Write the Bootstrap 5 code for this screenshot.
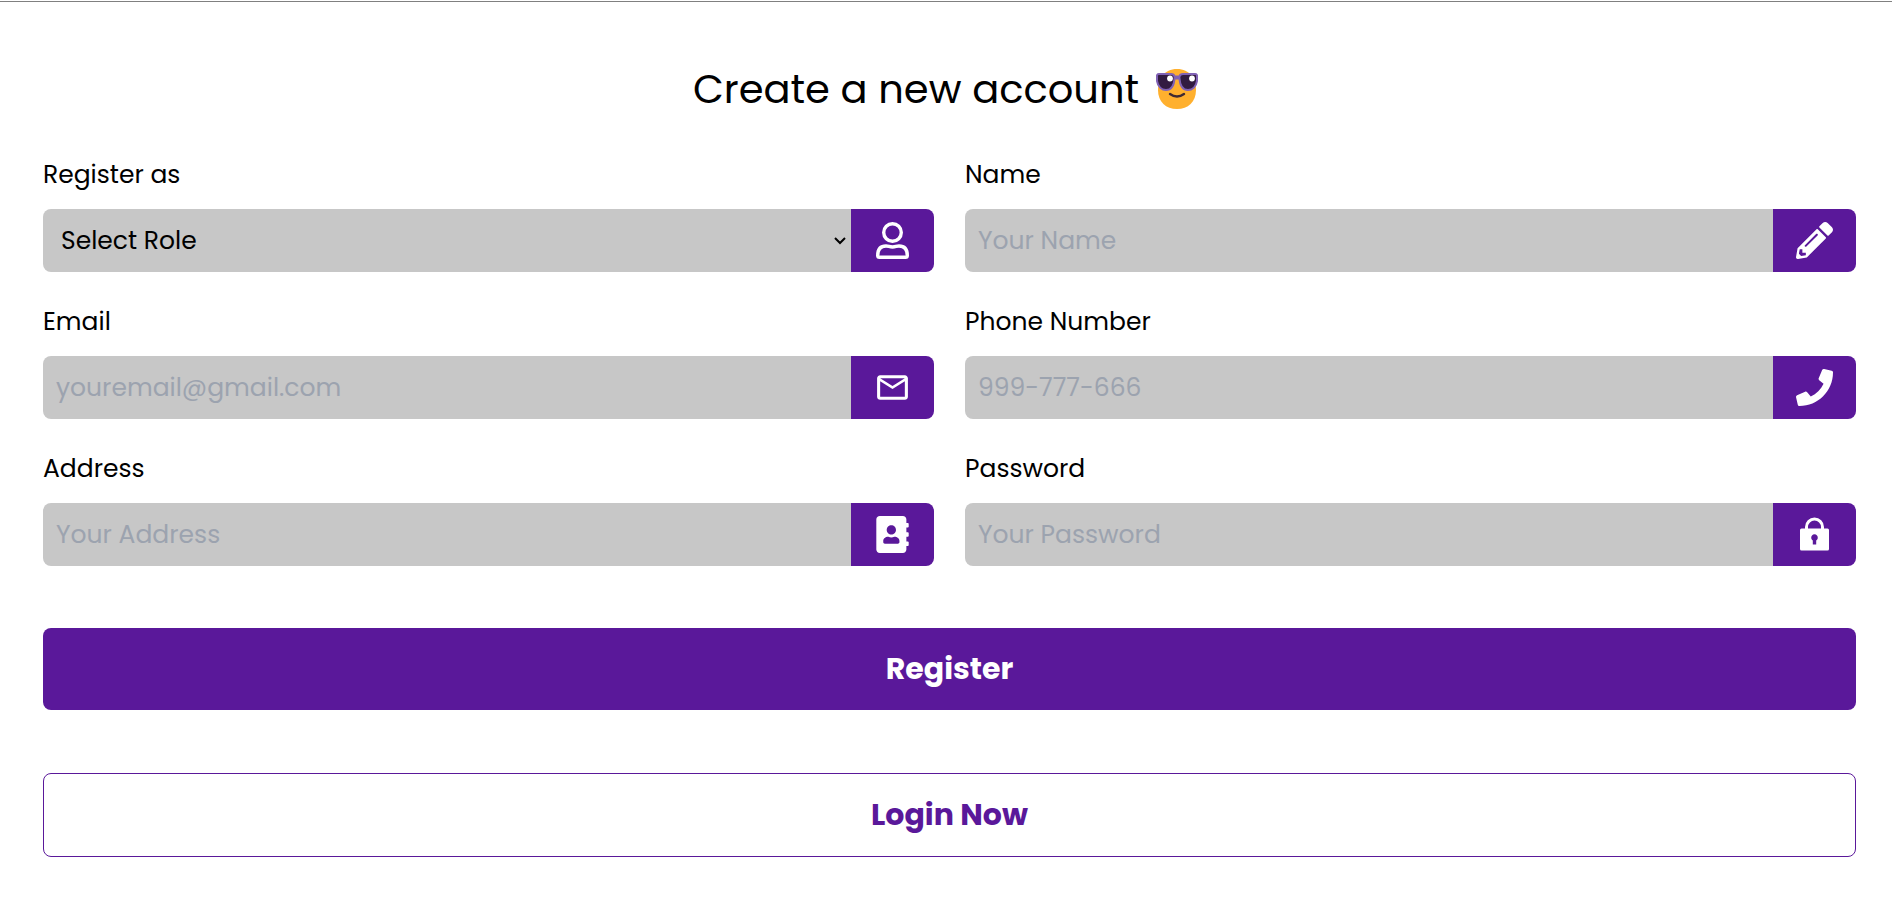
<!DOCTYPE html>
<html lang="en">
<head>
<meta charset="utf-8">
<meta name="viewport" content="width=device-width, initial-scale=1">
<title>Create a new account</title>
<link href="https://cdn.jsdelivr.net/npm/bootstrap@5.3.0/dist/css/bootstrap.min.css" rel="stylesheet">
<style>
  :root { --brand: #5a189a; --field: #c7c7c7; }
  body { font-family: Poppins, Inter, "Noto Sans", sans-serif; color: #000; background: #fff; font-size: 25px; line-height: 38px; }
  .top-rule { height: 2px; border-bottom: 1px solid #808080; }
  .signup { padding: 57px 0 48px; }
  .signup form { padding: 0 36px 0 43px; }
  .signup-title { font-size: 40px; line-height: 60px; font-weight: 400; margin-bottom: 37px; gap: 16px; }
  .fields { --bs-gutter-x: 31px; --bs-gutter-y: 31px; }
  .fields label { line-height: 38px; margin-bottom: 15px; }
  .entry { height: 63px; border-radius: 8px; overflow: hidden; }
  .entry input, .entry select { border: 0; background: var(--field); color: #000; min-width: 0; padding: 0 13px; outline-offset: -2px; }
  .entry select { appearance: none; padding: 0 24px 0 18px; background: var(--field) url("data:image/svg+xml,%3Csvg xmlns='http://www.w3.org/2000/svg' viewBox='0 0 12 8'%3E%3Cpath d='M1 1l5 5 5-5' fill='none' stroke='%23000' stroke-width='2'/%3E%3C/svg%3E") no-repeat right 5px center / 12px 8px; }
  .entry input::placeholder { color: #9ca3af; opacity: 1; }
  .entry-icon { width: 83px; background: var(--brand); color: #fff; }
  .action { border-radius: 8px; font-size: 30px; line-height: 46px; font-weight: 700; padding: 18px; border: 0; }
  .action-fill, .action-fill:hover { background: var(--brand); color: #fff; margin-top: 62px; }
  .action-line, .action-line:hover { border: 1px solid var(--brand); color: var(--brand); background: #fff; margin-top: 63px; }
</style>
</head>
<body>
<div class="top-rule"></div>
<main class="signup">
  <h1 class="signup-title d-flex justify-content-center align-items-center">Create a new account
    <svg width="44" height="44" viewBox="0 0 44 44" role="img" aria-label="Smiling face with sunglasses">
      <path d="M22 2C35 2 41 12 41 23C41 35 33 42 22 42S3 35 3 23C3 12 9 2 22 2Z" fill="#ffb02e"/>
      <path d="M15 27Q22 32 29 27" fill="none" stroke="#402a32" stroke-width="2.400" stroke-linecap="round"/>
      <path d="M4 7H16Q19 7 19.500 9.500H24.500Q25 7 28 7H40Q42.500 7 42 10V14C41 20 37 23 33 23C28 23 25 19 24.500 11.500H19.500C19 19 16 23 11 23C7 23 3 20 2 14V10Q1.500 7 4 7Z" fill="#321b41" stroke="#8061b4" stroke-width="2"/>
      <circle cx="15" cy="11.500" r="2.900" fill="#fff"/><circle cx="37" cy="11.500" r="2.900" fill="#fff"/>
    </svg>
  </h1>
  <form>
    <div class="row fields">
      <div class="col-6">
        <label for="role" class="d-block">Register as</label>
        <div class="entry d-flex">
          <select id="role" class="flex-grow-1"><option>Select Role</option></select>
          <span class="entry-icon d-flex align-items-center justify-content-center">
            <svg width="37" height="37" viewBox="0 0 37 37" fill="none" stroke="#fff" stroke-width="3.400" stroke-linejoin="round"><circle cx="18.500" cy="10.500" r="8.800"/><path d="M12 24C6 24 3.700 28 3.700 33.500Q3.700 35.300 5.500 35.300H31.500Q33.300 35.300 33.300 33.500C33.300 28 31 24 25 24C22 24 22 25 18.500 25S15 24 12 24Z"/></svg>
          </span>
        </div>
      </div>
      <div class="col-6">
        <label for="name" class="d-block">Name</label>
        <div class="entry d-flex">
          <input id="name" type="text" class="flex-grow-1" placeholder="Your Name">
          <span class="entry-icon d-flex align-items-center justify-content-center">
            <svg width="37" height="37" viewBox="0 0 512 512" fill="currentColor"><path d="M497.900 142.100l-46.100 46.100c-4.700 4.700-12.300 4.700-17 0l-111-111c-4.700-4.700-4.700-12.300 0-17l46.100-46.100c18.700-18.700 49.100-18.700 67.900 0l60.100 60.100c18.800 18.700 18.800 49.100 0 67.900zM284.200 99.800L21.600 362.400.4 483.900c-2.900 16.400 11.400 30.600 27.800 27.800l121.500-21.300 262.600-262.600c4.700-4.700 4.700-12.300 0-17l-111-111c-4.800-4.700-12.400-4.700-17.100 0zM124.100 339.900c-5.500-5.500-5.500-14.300 0-19.800l154-154c5.500-5.500 14.300-5.500 19.800 0s5.500 14.300 0 19.800l-154 154c-5.500 5.500-14.300 5.500-19.800 0zM88 424h48v36.300l-64.500 11.300-31.100-31.100L51.700 376H88v48z"/></svg>
          </span>
        </div>
      </div>
      <div class="col-6">
        <label for="email" class="d-block">Email</label>
        <div class="entry d-flex">
          <input id="email" type="email" class="flex-grow-1" placeholder="youremail@gmail.com">
          <span class="entry-icon d-flex align-items-center justify-content-center">
            <svg width="37" height="37" viewBox="0 0 24 24" fill="currentColor"><path d="M22 6c0-1.100-.9-2-2-2H4c-1.100 0-2 .9-2 2v12c0 1.100.9 2 2 2h16c1.100 0 2-.9 2-2V6zm-2 0l-8 5-8-5h16zm0 12H4V8l8 5 8-5v10z"/></svg>
          </span>
        </div>
      </div>
      <div class="col-6">
        <label for="phone" class="d-block">Phone Number</label>
        <div class="entry d-flex">
          <input id="phone" type="tel" class="flex-grow-1" placeholder="999-777-666">
          <span class="entry-icon d-flex align-items-center justify-content-center">
            <svg width="37" height="37" viewBox="0 0 512 512" fill="currentColor"><path d="M493.400 24.600l-104-24c-11.300-2.600-22.900 3.300-27.500 13.900l-48 112c-4.200 9.800-1.400 21.300 6.900 28l60.600 49.600c-36 76.700-98.900 140.500-177.200 177.200l-49.600-60.600c-6.800-8.300-18.200-11.100-28-6.900l-112 48C3.900 366.500-2 378.100.6 389.400l24 104C27.100 504.200 36.700 512 48 512c256.100 0 464-207.500 464-464 0-11.200-7.700-20.900-18.600-23.400z"/></svg>
          </span>
        </div>
      </div>
      <div class="col-6">
        <label for="address" class="d-block">Address</label>
        <div class="entry d-flex">
          <input id="address" type="text" class="flex-grow-1" placeholder="Your Address">
          <span class="entry-icon d-flex align-items-center justify-content-center">
            <svg width="37" height="37" viewBox="0 0 448 512" fill="currentColor"><path d="M436 160c6.600 0 12-5.400 12-12v-40c0-6.600-5.400-12-12-12h-20V48c0-26.500-21.500-48-48-48H48C21.500 0 0 21.500 0 48v416c0 26.500 21.500 48 48 48h320c26.500 0 48-21.500 48-48v-48h20c6.600 0 12-5.400 12-12v-40c0-6.600-5.400-12-12-12h-20v-64h20c6.600 0 12-5.400 12-12v-40c0-6.600-5.400-12-12-12h-20v-64h20zm-228-32c35.300 0 64 28.700 64 64s-28.700 64-64 64-64-28.700-64-64 28.700-64 64-64zm112 236.800c0 10.600-10 19.200-22.400 19.200H118.400C106 384 96 375.400 96 364.800v-19.200c0-31.800 30.100-57.600 67.200-57.600h5c12.300 5.100 25.700 8 39.800 8s27.600-2.900 39.800-8h5c37.100 0 67.200 25.800 67.200 57.600v19.200z"/></svg>
          </span>
        </div>
      </div>
      <div class="col-6">
        <label for="password" class="d-block">Password</label>
        <div class="entry d-flex">
          <input id="password" type="password" class="flex-grow-1" placeholder="Your Password">
          <span class="entry-icon d-flex align-items-center justify-content-center">
            <svg width="37" height="37" viewBox="0 0 37 37"><path d="M10.500 14V11A8 8 0 0 1 26.500 11V14" fill="none" stroke="#fff" stroke-width="3"/><path fill="#fff" fill-rule="evenodd" d="M5.500 12.500H31.500Q33 12.500 33 14V33Q33 34.500 31.500 34.500H5.500Q4 34.500 4 33V14Q4 12.500 5.500 12.500ZM16.800 24.500V28.500H20.200V24.500A3.300 3.300 0 1 0 16.800 24.500Z"/></svg>
          </span>
        </div>
      </div>
    </div>
    <button type="submit" class="btn action action-fill d-block w-100">Register</button>
    <button type="button" class="btn action action-line d-block w-100">Login Now</button>
  </form>
</main>
<script src="https://cdn.jsdelivr.net/npm/bootstrap@5.3.0/dist/js/bootstrap.bundle.min.js"></script>
</body>
</html>
